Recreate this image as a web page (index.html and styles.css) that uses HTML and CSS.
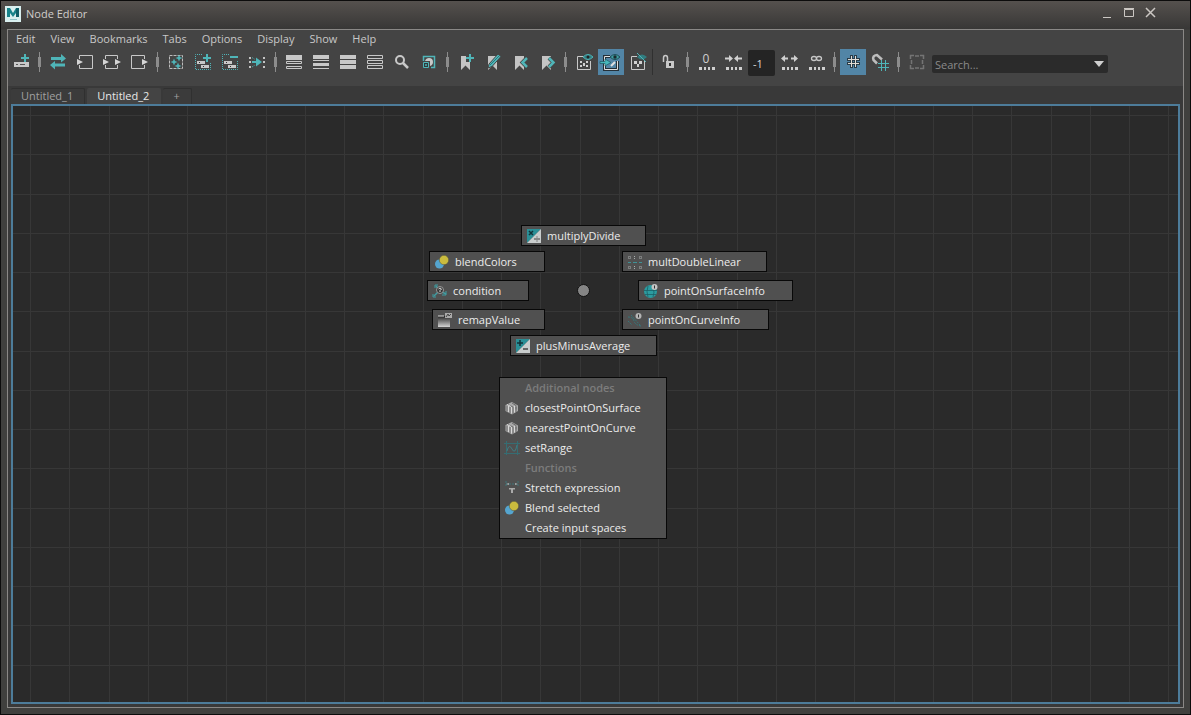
FILE: index.html
```html
<!DOCTYPE html>
<html lang="en">
<head>
<meta charset="utf-8">
<title>Node Editor</title>
<link rel="stylesheet" href="styles.css">
</head>
<body>
<svg class="defs" aria-hidden="true">
  <defs>
    <path id="bookmark" d="M8 7h9v14l-4.500-4.500L8 21z" fill="#c4c4c4"/>
    <path id="plus" d="M-4 0h8M0-4v8" stroke="#4fb5b8" stroke-width="2"/>
    <g id="dots" fill="#d0d0d0"><path d="M6 18h3v3H6zM11 18h2v3h-2zM15 18h2v3h-2zM19 18h3v3h-3z"/></g>
    <path id="spark" d="M0-3.500L1-1l2.500 1L1 1 0 3.500-1 1-3.500 0-1-1z"/>
    <g id="blend"><circle cx="5.500" cy="10" r="4.500" fill="#55a5cf"/><circle cx="10" cy="6" r="4.700" fill="#c9bb3e" stroke="#4a4a3c" stroke-width=".5"/></g>
    <g id="plugin"><path d="M1.500 5L8 2l6 3.500v5.500L8 14.500 1.500 11z" fill="#a9a9a9"/><path d="M3 5.500v6M6 7v6M9 7v7M4 4.500l5 2.500M8 3l4 2.500v4M12 7v5" stroke="#6c6c6c" fill="none"/><path d="M4.500 6v6M7.500 7v6.500M3 4.500l4 2M10.500 6v6.500" stroke="#d8d8d8" fill="none"/></g>
  </defs>
</svg>
<div class="window">
  <header class="titlebar">
    <svg class="logo" viewBox="0 0 16 16"><path d="M0 0h16v16H0z" fill="#d9efef"/><path d="M2 2h3l3 5 3-5h3v9h-3V7l-3 4-3-4v4H2z" fill="#17838a"/><path d="M11 2h3v9h-3z" fill="#0f5f68"/><path d="M5 13.500h7" stroke="#8fc4c8"/></svg>
    <h1 class="title">Node Editor</h1>
    <div class="controls">
      <button class="control" aria-label="Minimize"><svg viewBox="0 0 22 20"><path d="M6 14.500h8" stroke="#cbc7c3"/></svg></button>
      <button class="control" aria-label="Maximize"><svg viewBox="0 0 22 20"><path d="M5.500 6.500h9v7h-9zM5 5.500h10" stroke="#cbc7c3" fill="none"/></svg></button>
      <button class="control" aria-label="Close"><svg viewBox="0 0 22 20"><path d="M5 5l9 9M14 5l-9 9" stroke="#cbc7c3" stroke-width="1.500"/></svg></button>
    </div>
  </header>
  <main class="frame">
    <nav class="menubar">
      <button class="menu">Edit</button><button class="menu">View</button><button class="menu">Bookmarks</button><button class="menu">Tabs</button><button class="menu">Options</button><button class="menu">Display</button><button class="menu">Show</button><button class="menu">Help</button>
    </nav>
    <div class="toolbar">
      <button class="tool" aria-label="Create node"><svg viewBox="0 0 27 26"><path d="M6 13h15v5H6z" fill="#c8c8c8"/><path d="M8 15h2v1H8zM12 15h5v1h-5z" fill="#555"/><path d="M13 5h8v8h-8z" fill="#444"/><use href="#plus" x="17" y="9"/></svg></button>
      <span class="sep"></span>
      <button class="tool" aria-label="Synchronize"><svg viewBox="0 0 27 26"><path d="M6 8h10V5l5 4.500-5 4V11H6zM20 14.500H10v-2.500l-5 4 5 4.500v-3h10z" fill="#4fb5b8"/></svg></button>
      <button class="tool" aria-label="Input connections"><svg viewBox="0 0 27 26"><path d="M7.500 10V6.500h13v13h-13V16" stroke="#c8c8c8" fill="none"/><path d="M5 10l6 3-6 3z" fill="#d4d4d4"/></svg></button>
      <button class="tool" aria-label="Input and output connections"><svg viewBox="0 0 27 26"><path d="M6.500 10V6.500h12V10M6.500 16v3.500h12V16" stroke="#c8c8c8" fill="none"/><path d="M4 10l6 3-6 3zM16 10l6 3-6 3z" fill="#d4d4d4"/></svg></button>
      <button class="tool" aria-label="Output connections"><svg viewBox="0 0 27 26"><path d="M18.500 10V6.500h-13v13h13V16" stroke="#c8c8c8" fill="none"/><path d="M16 10l6 3-6 3z" fill="#d4d4d4"/></svg></button>
      <span class="sep"></span>
      <button class="tool" aria-label="Clear graph"><svg viewBox="0 0 27 26"><path d="M6.500 6.500h13v13h-13z" stroke="#bdbdbd" fill="none" stroke-dasharray="3 1"/><g fill="#4fb5b8"><use href="#spark" x="11" y="13"/><use href="#spark" x="16" y="9"/><use href="#spark" x="15" y="17"/></g></svg></button>
      <button class="tool" aria-label="Add to graph"><svg viewBox="0 0 27 26"><path d="M12 5.500H5.500v15h15V13" stroke="#4fb5b8" fill="none" stroke-dasharray="1 1"/><path d="M7 12h8v3H7zM11 16h8v3h-8z" fill="#c8c8c8"/><path d="M9 13h1v1H9zM13 17h1v1h-1z" fill="#333"/><use href="#plus" x="17" y="9"/></svg></button>
      <button class="tool" aria-label="Remove from graph"><svg viewBox="0 0 27 26"><path d="M12 5.500H5.500v15h15V11" stroke="#4fb5b8" fill="none" stroke-dasharray="1 1"/><path d="M7 12h8v3H7zM11 16h8v3h-8z" fill="#c8c8c8"/><path d="M9 13h1v1H9zM13 17h1v1h-1z" fill="#333"/><path d="M13 8h8" stroke="#4fb5b8" stroke-width="2"/></svg></button>
      <button class="tool" aria-label="Rearrange graph"><svg viewBox="0 0 27 26"><path d="M5 8h2v2H5zM5 12h2v2H5zM5 17h2v2H5zM19 8h2v2h-2zM19 12h2v2h-2zM19 17h2v2h-2z" fill="#c4c4c4"/><path d="M8 12h4V8.500l6 4.500-6 4.500V14H8z" fill="#4fb5b8"/><path d="M8 8.500l3 2M8 18l3-2" stroke="#4fb5b8" stroke-dasharray="1 1"/></svg></button>
      <span class="sep"></span>
      <button class="tool" aria-label="Simple mode"><svg viewBox="0 0 27 26"><path d="M5 6h16v5H5z" fill="#c8c8c8"/><path d="M5.500 12.500h15v2h-15zM5.500 17.500h15v2h-15z" stroke="#c8c8c8" fill="none"/></svg></button>
      <button class="tool" aria-label="Connected mode"><svg viewBox="0 0 27 26"><path d="M5 6h16v4H5zM5 14h16v3H5z" fill="#c8c8c8"/><path d="M5 11.500h16M5 19.500h16" stroke="#c8c8c8"/></svg></button>
      <button class="tool" aria-label="Full mode"><svg viewBox="0 0 27 26"><path d="M5 6h16v4H5zM5 11h16v4H5zM5 16h16v4H5z" fill="#c8c8c8"/></svg></button>
      <button class="tool" aria-label="Custom mode"><svg viewBox="0 0 27 26"><path d="M5.500 6.500h15v3h-15zM5.500 11.500h15v3h-15zM5.500 16.500h15v3h-15z" stroke="#c8c8c8" fill="none"/></svg></button>
      <button class="tool" aria-label="Find"><svg viewBox="0 0 27 26"><circle cx="11" cy="11" r="4" stroke="#c8c8c8" stroke-width="2" fill="none"/><path d="M14 14l5 5" stroke="#c8c8c8" stroke-width="2.500"/></svg></button>
      <button class="tool" aria-label="Swatch size"><svg viewBox="0 0 27 26"><path d="M7.500 12V7.500h11v11H15" stroke="#4fb5b8" fill="none" stroke-width="1.500"/><path d="M9 12q1-3 4-3 4 0 4 4 0 3-3 4v-5z" fill="#c8c8c8"/><path d="M7.500 13.500h5v5h-5zM9.500 15.500h1v1h-1z" stroke="#4fb5b8" fill="#2e3b3c"/></svg></button>
      <span class="sep"></span>
      <button class="tool" aria-label="Create bookmark"><svg viewBox="0 0 27 26"><use href="#bookmark"/><path d="M13 5h3v3h-3zM13 10h3v3h-3z" fill="#444"/><use href="#plus" x="17" y="9"/></svg></button>
      <button class="tool" aria-label="Edit bookmark"><svg viewBox="0 0 27 26"><use href="#bookmark"/><path d="M8 19l1-4 9-10 3 2.500-9 10z" fill="#4fb5b8" stroke="#444"/><path d="M10 16l9-9" stroke="#27777b"/></svg></button>
      <button class="tool" aria-label="Previous bookmark"><svg viewBox="0 0 27 26"><use href="#bookmark"/><path d="M20 9L15.500 13.500l4.500 4.500" stroke="#444" stroke-width="4" fill="none"/><path d="M20 9L15.500 13.500l4.500 4.500" stroke="#4fb5b8" stroke-width="2.500" fill="none"/></svg></button>
      <button class="tool" aria-label="Next bookmark"><svg viewBox="0 0 27 26"><use href="#bookmark"/><path d="M15 9L19.500 13.500 15 18" stroke="#444" stroke-width="4" fill="none"/><path d="M15 9L19.500 13.500 15 18" stroke="#4fb5b8" stroke-width="2.500" fill="none"/></svg></button>
      <span class="sep"></span>
      <button class="tool" aria-label="Show shapes"><svg viewBox="0 0 27 26"><path d="M12 7.500H6.500v13h13V12" stroke="#c8c8c8" fill="none"/><path d="M9 12h2v2H9zM15 12h2v2h-2zM12 14h2v3h-2zM9 16h2v2H9zM15 16h2v2h-2z" fill="#d0d0d0"/><path d="M12 8q5-5 10 0-5 5-10 0z" fill="#317d80" stroke="#4fb5b8"/><circle cx="17" cy="8" r="1.500" fill="#222"/></svg></button>
      <button class="tool active" aria-label="Show connected shapes" aria-pressed="true"><svg viewBox="0 0 27 26"><path d="M12 7.500H6.500v13h13V12" stroke="#253038" stroke-width="3" fill="none"/><path d="M12 7.500H6.500v13h13V12" stroke="#e0e0e0" fill="none"/><path d="M13 17l4-4" stroke="#e0e0e0" stroke-width="2" fill="none"/><path d="M2 12.500h5V10l6 3.500L7 17v-2.500H2z" fill="#46b6ba" stroke="#1d5964" stroke-width=".7"/><path d="M12 8q5-5 10 0-5 5-10 0z" fill="#3f9fa3" stroke="#1d4c55"/><circle cx="17" cy="8" r="1.700" fill="#1a2a30"/></svg></button>
      <button class="tool" aria-label="Hide shapes"><svg viewBox="0 0 27 26"><path d="M12 7.500H6.500v13h13V12" stroke="#c8c8c8" fill="none"/><path d="M9 12h3v3H9zM14 12h3v3h-3zM12 15h2v3h-2z" fill="#d0d0d0"/><path d="M12 8q5-5 10 0-5 5-10 0z" fill="#317d80"/><path d="M12 4l9 9" stroke="#4fb5b8"/></svg></button>
      <span class="rule"></span>
      <button class="tool" aria-label="Lock"><svg viewBox="0 0 27 26"><path d="M10 12h8v7h-8z" fill="#c8c8c8"/><path d="M7.500 13V9q0-2.500 2-2.500t2 2.500v3" stroke="#c8c8c8" stroke-width="1.500" fill="none"/><path d="M13 14h2v3h-2z" fill="#333"/></svg></button>
      <span class="sep"></span>
      <button class="tool" aria-label="Depth zero"><svg viewBox="0 0 27 26"><text class="glyph" x="13" y="14">0</text><use href="#dots"/></svg></button>
      <button class="tool" aria-label="Decrease depth"><svg viewBox="0 0 27 26"><path d="M5 9.500h4M22 9.500h-4" stroke="#d0d0d0" stroke-width="2"/><path d="M9 6l4 3.500L9 13zM18 6l-4 3.500 4 3.500z" fill="#d0d0d0"/><use href="#dots"/></svg></button>
      <input class="depth" aria-label="Traversal depth" value="-1">
      <button class="tool" aria-label="Increase depth"><svg viewBox="0 0 27 26"><path d="M9 9.500h3M18 9.500h-3" stroke="#d0d0d0" stroke-width="2"/><path d="M9 6L5 9.500 9 13zM18 6l4 3.500-4 3.500z" fill="#d0d0d0"/><use href="#dots"/></svg></button>
      <button class="tool" aria-label="Unlimited depth"><svg viewBox="0 0 27 26"><ellipse cx="11" cy="9.500" rx="2.500" ry="2" stroke="#c8c8c8" fill="none" stroke-width="1.300"/><ellipse cx="16" cy="9.500" rx="2.500" ry="2" stroke="#c8c8c8" fill="none" stroke-width="1.300"/><use href="#dots"/></svg></button>
      <span class="sep"></span>
      <button class="tool active" aria-label="Toggle grid" aria-pressed="true"><svg viewBox="0 0 27 26"><path d="M11.500 6v13M15.500 6v13M7 10.500h13M7 14.500h13" stroke="#2a3c48" stroke-width="3"/><path d="M11.500 7v11M15.500 7v11M8 10.500h11M8 14.500h11" stroke="#e2ddd6"/></svg></button>
      <button class="tool" aria-label="Snap to grid"><svg viewBox="0 0 27 26"><path d="M10 14.500L6.500 11Q5 6.500 10 6l5 4.500" stroke="#bdbdbd" stroke-width="2.500" fill="none"/><path d="M14.500 11v11M18.500 11v11M11 14.500h11M11 18.500h11" stroke="#4fb5b8"/></svg></button>
      <span class="sep"></span>
      <button class="tool" aria-label="Frame selection" disabled><svg viewBox="0 0 27 26"><path d="M6.500 10V6.500H10M16 6.500h3.500V10M19.500 16v3.500H16M10 19.500H6.500V16M11 7h4M11 19h4M7.500 11v4M18.500 11v4" stroke="#747474" fill="none" stroke-width="1.500"/></svg></button>
      <div class="search">
        <input class="search-input" aria-label="Search" placeholder="Search...">
        <button class="search-drop" aria-label="Search history"><svg viewBox="0 0 16 18"><path d="M2 6h10l-5 6z" fill="#d0d0d0"/></svg></button>
      </div>
    </div>
    <div class="tabs" role="tablist">
      <button class="tab" role="tab" aria-selected="false">Untitled_1</button>
      <button class="tab" role="tab" aria-selected="true">Untitled_2</button>
      <button class="tab" aria-label="New tab">+</button>
    </div>
    <section class="canvas">
      <svg class="grid" aria-hidden="true">
        <defs><pattern id="gridlines" x="17" y="9" width="157" height="157" patternUnits="userSpaceOnUse"><path d="M0 0h1v157H0zM39 0h1v157h-1zM79 0h1v157h-1zM118 0h1v157h-1zM0 0h157v1H0zM0 39h157v1H0zM0 79h157v1H0zM0 118h157v1H0z" fill="#373737"/></pattern></defs>
        <rect width="100%" height="100%" fill="url(#gridlines)"/>
      </svg>
      <span class="origin"></span>
      <button class="node n"><svg viewBox="0 0 16 16"><path d="M1 1h14L1 15z" fill="#2a8f96"/><path d="M15 1v14H1z" fill="#c9cdcd"/><path d="M3 3l4 4M7 3L3 7" stroke="#12333a" stroke-width="1.500"/><path d="M8 11h6" stroke="#444"/><path d="M10.500 8.500h1v1h-1zM10.500 12.500h1v1h-1z" fill="#444"/></svg>multiplyDivide</button>
      <button class="node nw"><svg viewBox="0 0 16 16"><use href="#blend"/></svg>blendColors</button>
      <button class="node ne"><svg viewBox="0 0 16 16"><g stroke="#a9adad" fill="none"><path d="M1.500 2.500h2v2h-2zM7.500 2v3M12.500 2.500h2v2h-2zM1.500 12.500h2v2h-2zM7.500 12v3M12.500 12.500h2v2h-2z" stroke-dasharray="1 1"/></g><path d="M1 8.500h3M6 8.500h4M12 8.500h3" stroke="#3f9297"/></svg>multDoubleLinear</button>
      <button class="node w"><svg viewBox="0 0 16 16"><path d="M7 8l-5 5M8 8L4 3M8 8l6 3" stroke="#3f9ca1" stroke-width="1.500"/><path d="M1 11v3h3M14 8v4h-4M3 5V2h3" stroke="#3f9ca1" fill="none"/><circle cx="8" cy="7" r="3.500" fill="#343434" stroke="#999"/><path d="M6.500 6q1.500-2 3 0L8 7.500V9" stroke="#ddd" fill="none"/></svg>condition</button>
      <button class="node e"><svg viewBox="0 0 16 16"><circle cx="7.500" cy="8.500" r="6.500" fill="#2c9ca0"/><path d="M1 7.500h13M2 11.500h11M5 3q-2 6 0 11M10 5q2 4 0 9" stroke="#1a6167" stroke-width=".8" fill="none"/><circle cx="11.500" cy="4" r="3" fill="#c5c5c5"/><path d="M11.500 2.500v3" stroke="#333"/></svg>pointOnSurfaceInfo</button>
      <button class="node sw"><svg viewBox="0 0 16 16"><defs><linearGradient id="ramp" x2="0" y2="1"><stop offset="0" stop-color="#222"/><stop offset="1" stop-color="#d5d5d5"/></linearGradient></defs><path d="M1 4h12v11H1z" fill="url(#ramp)"/><path d="M8 1h7v5H8z" fill="#aaa"/><path d="M9 5l2-3 1 2 2-2" stroke="#444" fill="none"/><path d="M1 4h6" stroke="#ddd"/></svg>remapValue</button>
      <button class="node se"><svg viewBox="0 0 16 16"><path d="M1 5q5 0 6 4t7 5M1 9l4 4M4 3l9 10" stroke="#35777b" fill="none" stroke-dasharray="2 1"/><circle cx="11.500" cy="4" r="3" fill="#b5b5b5"/><path d="M11.500 2.500v3" stroke="#333"/></svg>pointOnCurveInfo</button>
      <button class="node s"><svg viewBox="0 0 16 16"><path d="M1 1h14L1 15z" fill="#2a8f96"/><path d="M15 1v14H1z" fill="#c9cdcd"/><path d="M2 5h6M5 2v6" stroke="#12333a" stroke-width="1.500"/><path d="M8 11h5" stroke="#444" stroke-width="1.500"/></svg>plusMinusAverage</button>
      <div class="popup">
        <h2 class="group">Additional nodes</h2>
        <button class="item"><svg viewBox="0 0 16 16"><use href="#plugin"/></svg>closestPointOnSurface</button>
        <button class="item"><svg viewBox="0 0 16 16"><use href="#plugin"/></svg>nearestPointOnCurve</button>
        <button class="item"><svg viewBox="0 0 16 16"><path d="M0 3.500h16M0 13.500h16M2.500 1v14M13.500 1v14" stroke="#356d73" fill="none"/><path d="M3 11q2-8 5-2t5-4" stroke="#3f7d83" fill="none"/></svg>setRange</button>
        <h2 class="group">Functions</h2>
        <button class="item"><svg viewBox="0 0 16 16"><path d="M2 1v6M14 1v6M2 4h12" stroke="#3c7478" fill="none" stroke-dasharray="2 1"/><path d="M2 4l3-1v2zM14 4l-3-1v2zM5 8h6v1.500H9V13H7V9.500H5z" fill="#aaa"/></svg>Stretch expression</button>
        <button class="item"><svg viewBox="0 0 16 16"><use href="#blend"/></svg>Blend selected</button>
        <button class="item"><svg viewBox="0 0 16 16"></svg>Create input spaces</button>
      </div>
    </section>
  </main>
</div>
</body>
</html>
```

FILE: styles.css
```css
* { box-sizing: border-box; }
body { margin: 0; background: #0c0c0c; color: #c8c8c8; font: 11px/16px "Open Sans", "Noto Sans", sans-serif; }
button, input { font: inherit; color: inherit; border: 0; margin: 0; padding: 0; background: none; }
svg { display: block; }
h1, h2 { margin: 0; font: inherit; }
.defs { position: absolute; width: 0; height: 0; }
.window { min-height: 100vh; display: flex; flex-direction: column; border: 1px solid #0c0c0c; padding: 0 6px 6px; background: linear-gradient(#55514e, #383736 28px, #40403e 29px); }
.titlebar { height: 28px; display: flex; align-items: center; justify-content: space-between; padding: 0 21px 3px 0; }
.logo { width: 16px; height: 16px; margin-left: -2px; flex: none; }
.title { flex: 1; padding-left: 5px; color: #d0cdca; }
.controls { display: flex; }
.control { width: 22px; height: 20px; margin-bottom: 2px; }
.frame { flex: 1; display: flex; flex-direction: column; border: 1px solid #8a8886; background: #393939; }
.menubar { display: flex; height: 19px; padding-left: 1px; background: #444; }
.menu { height: 17px; padding: 0 8px 0 7px; line-height: 16px; }
.toolbar { display: flex; align-items: flex-start; height: 37px; background: #444; }
.tool { width: 27px; height: 26px; flex: none; }
.tool svg { width: 27px; height: 26px; }
.active { background: linear-gradient(to right, #5285a6 26px, transparent 26px); }
.sep { width: 10px; height: 26px; flex: none; background: linear-gradient(#8c8c8c, #8c8c8c) 4px 3px / 1px 20px no-repeat, linear-gradient(#8c8c8c, #8c8c8c) 3px 8px / 3px 10px no-repeat; }
.rule { width: 4px; height: 26px; flex: none; border-left: 1px solid #303030; }
.glyph { font: 12px "Open Sans", sans-serif; fill: #d0d0d0; text-anchor: middle; }
.depth { width: 27px; height: 26px; margin: 1px; padding-left: 5px; border-radius: 2px; background: #242424; color: #d8d8d8; }
.search { display: flex; width: 176px; height: 18px; margin: 6px 1px; border-radius: 2px; background: #2b2b2b; }
.search-input { flex: 1; min-width: 0; padding: 2px 0 0 3px; }
.search-input::placeholder { color: #8a8a8a; opacity: 1; }
.search-drop, .search-drop svg { width: 16px; height: 18px; }
.tabs { display: flex; gap: 2px; padding: 2px 3px 0; height: 18px; }
.tab { height: 16px; padding: 0 11px 2px 10px; border: 1px solid #303030; border-width: 1px 1px 0 0; border-radius: 2px 2px 0 0; background: #3b3b3b; color: #a0a0a0; line-height: 13px; }
.tab[aria-selected="true"] { background: #444; border-color: #444; color: #e8e8e8; }
.canvas { position: relative; flex: 1; margin: 0 3px 3px; border: 2px solid #4d7c9a; background: #2a2a2a; overflow: hidden; }
.grid { position: absolute; width: 100%; height: 100%; }
.origin { position: absolute; left: 564px; top: 178px; width: 13px; height: 13px; border: 1px solid #111; border-radius: 50%; background: #858585; }
.node { position: absolute; height: 21px; display: flex; align-items: center; gap: 5px; padding: 0 4px; border: 1px solid #080808; background: #505050; color: #ececec; white-space: nowrap; }
.node svg, .item svg { width: 16px; height: 16px; flex: none; }
.n { left: 508px; top: 119px; width: 125px; }
.nw { left: 416px; top: 145px; width: 116px; }
.ne { left: 609px; top: 145px; width: 145px; }
.w { left: 414px; top: 174px; width: 102px; }
.e { left: 625px; top: 174px; width: 155px; }
.sw { left: 419px; top: 203px; width: 113px; }
.se { left: 609px; top: 203px; width: 147px; }
.s { left: 497px; top: 229px; width: 147px; }
.popup { position: absolute; left: 486px; top: 271px; width: 168px; display: flex; flex-direction: column; border: 1px solid #080808; background: #505050; color: #ececec; }
.group { height: 20px; padding-left: 25px; line-height: 20px; font-weight: 600; color: #7c7c7c; }
.item { height: 20px; display: flex; align-items: center; gap: 5px; padding-left: 4px; }
```
